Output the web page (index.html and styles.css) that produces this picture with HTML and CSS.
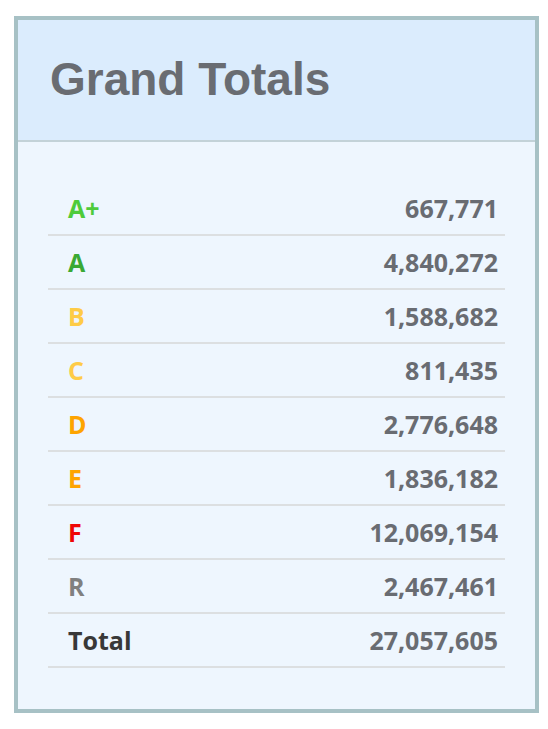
FILE: index.html
```html
<!DOCTYPE html>
<html>
<head>
<meta charset="utf-8">
<link rel="stylesheet" href="styles.css">
</head>
<body>
<div class="card">
  <div class="card-header">
    <h1 class="title">Grand Totals</h1>
  </div>
  <div class="card-body">
    <table class="totals">
      <tr><td class="grade g-aplus">A+</td><td class="num">667,771</td></tr>
      <tr><td class="grade g-a">A</td><td class="num">4,840,272</td></tr>
      <tr><td class="grade g-b">B</td><td class="num">1,588,682</td></tr>
      <tr><td class="grade g-c">C</td><td class="num">811,435</td></tr>
      <tr><td class="grade g-d">D</td><td class="num">2,776,648</td></tr>
      <tr><td class="grade g-e">E</td><td class="num">1,836,182</td></tr>
      <tr><td class="grade g-f">F</td><td class="num">12,069,154</td></tr>
      <tr><td class="grade g-r">R</td><td class="num">2,467,461</td></tr>
      <tr><td class="grade g-total">Total</td><td class="num">27,057,605</td></tr>
    </table>
  </div>
</div>
</body>
</html>
```
FILE: styles.css
```css
html, body {
  margin: 0;
  padding: 0;
  background: #ffffff;
}
body {
  padding: 16px 0 0 14px;
}
.card {
  width: 525px;
  box-sizing: border-box;
  border: 4px solid #a7c1c5;
  background: #eef6fe;
}
.card-header {
  height: 120px;
  background: #dbecfd;
  border-bottom: 2px solid #c3d2d8;
  padding-left: 32px;
  display: flex;
  align-items: center;
}
.title {
  margin: 0;
  font-family: "Liberation Sans", Arial, sans-serif;
  font-weight: 700;
  font-size: 46px;
  color: #696c72;
  line-height: 1;
  position: relative;
  top: -1px;
}
.card-body {
  padding: 40px 30px 41px 30px;
}
.totals {
  width: 100%;
  border-collapse: collapse;
  font-family: "Open Sans", sans-serif;
  font-weight: 700;
  font-size: 25px;
}
.totals td {
  height: 52px;
  padding: 0;
  border-bottom: 2px solid #dcdfe1;
  vertical-align: middle;
}
.grade {
  padding-left: 20px !important;
}
.num {
  text-align: right;
  padding-right: 7px !important;
  color: #696c72;
}
.g-aplus { color: #4ecb3b; }
.g-a { color: #3aa934; }
.g-b { color: #fecb47; }
.g-c { color: #fecb47; }
.g-d { color: #fea401; }
.g-e { color: #fea401; }
.g-f { color: #ef0606; }
.g-r { color: #808080; }
.g-total { color: #383838; }
```
